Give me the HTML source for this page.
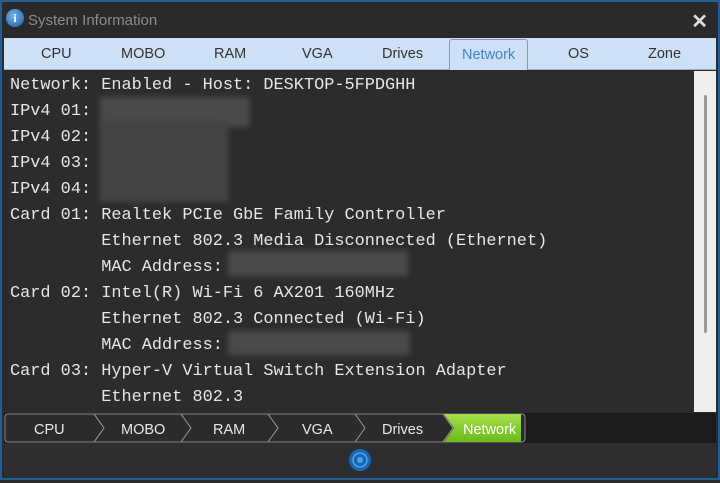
<!DOCTYPE html><html><head><style>
*{margin:0;padding:0;box-sizing:border-box}
body{width:720px;height:480px;background:#2a2a2c;position:relative;overflow:hidden;font-family:"Liberation Sans",sans-serif}
.frame{position:absolute;inset:0;border:2px solid #1f5f96;border-top-color:#2a5f8f}
.title{position:absolute;left:28px;top:12px;font-size:15px;color:#8d8d8f}
.ico{position:absolute;left:6px;top:9px;width:18px;height:18px;border-radius:50%;background:radial-gradient(circle at 40% 35%,#6fb0ea,#1e5c9e);color:#fff;font:bold 12px "Liberation Serif",serif;text-align:center;line-height:18px}
.x{position:absolute;right:12px;top:9px;color:#ddd;font-size:20px;font-weight:bold}
.tabs{position:absolute;left:4px;top:38px;width:712px;height:32px;background:#cde0f6;border-bottom:1px solid #aab}
.tabs span{position:absolute;top:8px;font-size:14.5px;color:#333}
.tabs .act{top:1px;height:31px;border:1px solid #8a9aa8;border-bottom:none;border-radius:3px 3px 0 0;color:#3d86c8;padding:7px 12px 0;background:#cde0f6}
.content{position:absolute;left:4px;top:71px;width:690px;height:341px;background:#2c2c2e}
.sb{position:absolute;left:694px;top:71px;width:22px;height:341px;background:#eeeeee}
.sb i{position:absolute;left:10px;top:24px;width:3px;height:238px;background:#999;border-radius:2px}
pre{position:absolute;left:10px;top:73px;font:16.9px/26px "Liberation Mono",monospace;color:#e6e6e6}
.bl{position:absolute;background:#4a4a4c;filter:blur(3px)}
.crumb{position:absolute;left:4px;top:413px;width:712px;height:30px;background:#1c1c1e}
.crumb svg{position:absolute;left:0;top:0}
.foot{position:absolute;left:4px;top:443px;width:712px;height:35px;background:#2e2e30}
</style></head><body>
<div class="frame"></div>
<div class="ico">i</div><div class="title">System Information</div><div class="x">✕</div>
<div class="tabs">
<span style="left:37px">CPU</span><span style="left:117px">MOBO</span><span style="left:210px">RAM</span><span style="left:298px">VGA</span><span style="left:378px">Drives</span>
<span class="act" style="left:445px">Network</span><span style="left:564px">OS</span><span style="left:644px">Zone</span></div>
<div class="content"></div>
<div class="sb"><i></i></div>
<div class="bl" style="left:100px;top:97px;width:150px;height:30px"></div>
<div class="bl" style="left:100px;top:122px;width:128px;height:80px;background:#444446"></div>
<div class="bl" style="left:228px;top:251px;width:180px;height:25px"></div>
<div class="bl" style="left:228px;top:331px;width:182px;height:24px"></div>
<pre>Network: Enabled - Host: DESKTOP-5FPDGHH
IPv4 01:
IPv4 02:
IPv4 03:
IPv4 04:
Card 01: Realtek PCIe GbE Family Controller
         Ethernet 802.3 Media Disconnected (Ethernet)
         MAC Address:
Card 02: Intel(R) Wi-Fi 6 AX201 160MHz
         Ethernet 802.3 Connected (Wi-Fi)
         MAC Address:
Card 03: Hyper-V Virtual Switch Extension Adapter
         Ethernet 802.3</pre>
<div class="crumb"><svg width="712" height="30">
<defs><linearGradient id="g" x1="0" y1="0" x2="0" y2="1"><stop offset="0" stop-color="#a6e04a"/><stop offset="1" stop-color="#6cb81a"/></linearGradient></defs>
<rect x="1" y="1" width="520" height="28" rx="3" fill="#2b2b2d" stroke="#888"/>
<polygon points="440,1 517,1 517,29 440,29 450,15" fill="url(#g)"/>
<g fill="none" stroke="#999" stroke-width="1"><polyline points="90,1 100,15 90,29"/><polyline points="177,1 187,15 177,29"/><polyline points="264,1 274,15 264,29"/><polyline points="351,1 361,15 351,29"/><polyline points="439,1 449,15 439,29"/></g>
<g font-family="Liberation Sans" font-size="14.5" fill="#e8e8e8"><text x="30" y="21">CPU</text><text x="117" y="21">MOBO</text><text x="209" y="21">RAM</text><text x="298" y="21">VGA</text><text x="378" y="21">Drives</text><text x="459" y="21" fill="#fff">Network</text></g>
</svg></div>
<div class="foot"><svg width="712" height="35"><circle cx="356" cy="17" r="11" fill="#1565b8"/><circle cx="356" cy="17" r="7" fill="none" stroke="#5aa0e0" stroke-width="1.5"/><circle cx="356" cy="17" r="3" fill="#5aa0e0"/></svg></div>
</body></html>
